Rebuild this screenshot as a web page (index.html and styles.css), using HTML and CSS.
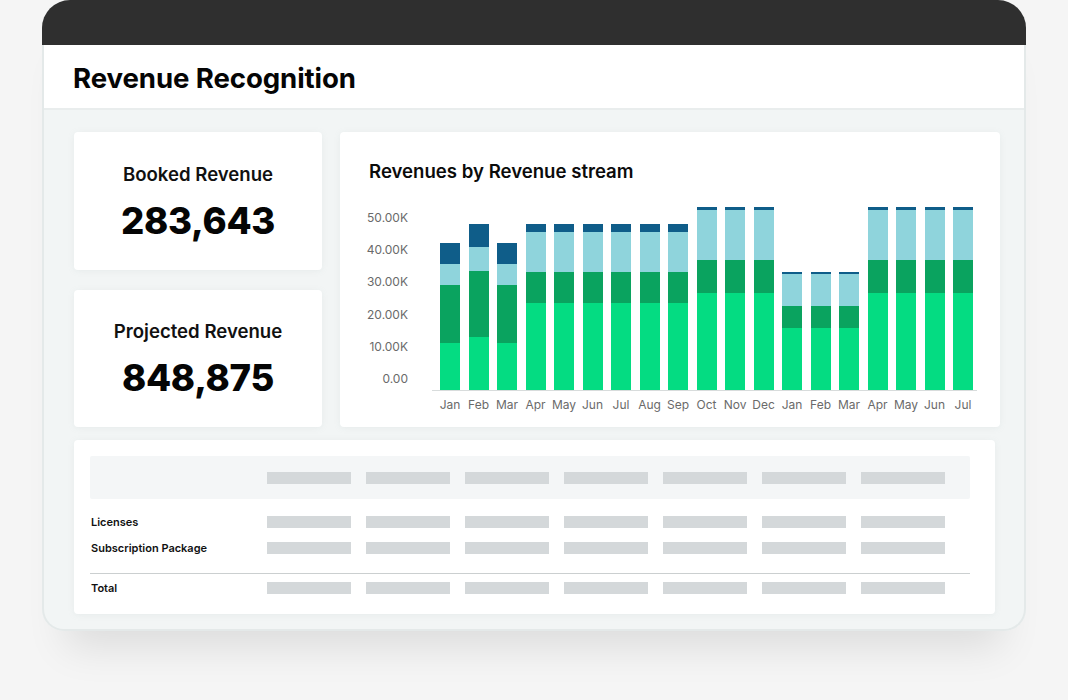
FILE: index.html
```html
<!DOCTYPE html>
<html lang="en">
<head>
<meta charset="utf-8">
<title>Revenue Recognition</title>
<link rel="stylesheet" href="styles.css">
</head>
<body>
<div class="frame">
  <div class="topbar"></div>
  <div class="main">
    <header class="header">
      <h1 class="title">Revenue Recognition</h1>
    </header>
    <div class="content">
      <div class="top-row">
        <div class="kpis">
          <section class="card kpi">
            <div class="kpi-label">Booked Revenue</div>
            <div class="kpi-value">283,643</div>
          </section>
          <section class="card kpi">
            <div class="kpi-label">Projected Revenue</div>
            <div class="kpi-value">848,875</div>
          </section>
        </div>
        <section class="card chart">
          <h2 class="chart-title">Revenues by Revenue stream</h2>
          <div class="chart-body">
            <div class="y-axis">
              <span>50.00K</span><span>40.00K</span><span>30.00K</span><span>20.00K</span><span>10.00K</span><span>0.00</span>
            </div>
            <div class="plot-wrap">
              <div class="plot">
                <div class="bar"><i class="s4" style="height:21px"></i><i class="s3" style="height:21px"></i><i class="s2" style="height:58px"></i><i class="s1" style="height:47px"></i></div>
                <div class="bar"><i class="s4" style="height:23px"></i><i class="s3" style="height:24px"></i><i class="s2" style="height:66px"></i><i class="s1" style="height:53px"></i></div>
                <div class="bar"><i class="s4" style="height:21px"></i><i class="s3" style="height:21px"></i><i class="s2" style="height:58px"></i><i class="s1" style="height:47px"></i></div>
                <div class="bar"><i class="s4" style="height:8px"></i><i class="s3" style="height:40px"></i><i class="s2" style="height:31px"></i><i class="s1" style="height:87px"></i></div>
                <div class="bar"><i class="s4" style="height:8px"></i><i class="s3" style="height:40px"></i><i class="s2" style="height:31px"></i><i class="s1" style="height:87px"></i></div>
                <div class="bar"><i class="s4" style="height:8px"></i><i class="s3" style="height:40px"></i><i class="s2" style="height:31px"></i><i class="s1" style="height:87px"></i></div>
                <div class="bar"><i class="s4" style="height:8px"></i><i class="s3" style="height:40px"></i><i class="s2" style="height:31px"></i><i class="s1" style="height:87px"></i></div>
                <div class="bar"><i class="s4" style="height:8px"></i><i class="s3" style="height:40px"></i><i class="s2" style="height:31px"></i><i class="s1" style="height:87px"></i></div>
                <div class="bar"><i class="s4" style="height:8px"></i><i class="s3" style="height:40px"></i><i class="s2" style="height:31px"></i><i class="s1" style="height:87px"></i></div>
                <div class="bar"><i class="s4" style="height:3px"></i><i class="s3" style="height:50px"></i><i class="s2" style="height:33px"></i><i class="s1" style="height:97px"></i></div>
                <div class="bar"><i class="s4" style="height:3px"></i><i class="s3" style="height:50px"></i><i class="s2" style="height:33px"></i><i class="s1" style="height:97px"></i></div>
                <div class="bar"><i class="s4" style="height:3px"></i><i class="s3" style="height:50px"></i><i class="s2" style="height:33px"></i><i class="s1" style="height:97px"></i></div>
                <div class="bar"><i class="s4" style="height:2px"></i><i class="s3" style="height:32px"></i><i class="s2" style="height:22px"></i><i class="s1" style="height:62px"></i></div>
                <div class="bar"><i class="s4" style="height:2px"></i><i class="s3" style="height:32px"></i><i class="s2" style="height:22px"></i><i class="s1" style="height:62px"></i></div>
                <div class="bar"><i class="s4" style="height:2px"></i><i class="s3" style="height:32px"></i><i class="s2" style="height:22px"></i><i class="s1" style="height:62px"></i></div>
                <div class="bar"><i class="s4" style="height:3px"></i><i class="s3" style="height:50px"></i><i class="s2" style="height:33px"></i><i class="s1" style="height:97px"></i></div>
                <div class="bar"><i class="s4" style="height:3px"></i><i class="s3" style="height:50px"></i><i class="s2" style="height:33px"></i><i class="s1" style="height:97px"></i></div>
                <div class="bar"><i class="s4" style="height:3px"></i><i class="s3" style="height:50px"></i><i class="s2" style="height:33px"></i><i class="s1" style="height:97px"></i></div>
                <div class="bar"><i class="s4" style="height:3px"></i><i class="s3" style="height:50px"></i><i class="s2" style="height:33px"></i><i class="s1" style="height:97px"></i></div>
              </div>
              <div class="months">
                <span>Jan</span><span>Feb</span><span>Mar</span><span>Apr</span><span>May</span><span>Jun</span><span>Jul</span><span>Aug</span><span>Sep</span><span>Oct</span><span>Nov</span><span>Dec</span><span>Jan</span><span>Feb</span><span>Mar</span><span>Apr</span><span>May</span><span>Jun</span><span>Jul</span>
              </div>
            </div>
          </div>
        </section>
      </div>
      <section class="card table-card">
        <div class="trow thead">
          <span class="tlabel"></span>
          <i class="ph"></i><i class="ph"></i><i class="ph"></i><i class="ph"></i><i class="ph"></i><i class="ph"></i><i class="ph"></i>
        </div>
        <div class="tbody">
          <div class="trow">
            <span class="tlabel">Licenses</span>
            <i class="ph"></i><i class="ph"></i><i class="ph"></i><i class="ph"></i><i class="ph"></i><i class="ph"></i><i class="ph"></i>
          </div>
          <div class="trow">
            <span class="tlabel">Subscription Package</span>
            <i class="ph"></i><i class="ph"></i><i class="ph"></i><i class="ph"></i><i class="ph"></i><i class="ph"></i><i class="ph"></i>
          </div>
        </div>
        <div class="trow ttotal">
          <span class="tlabel">Total</span>
          <i class="ph"></i><i class="ph"></i><i class="ph"></i><i class="ph"></i><i class="ph"></i><i class="ph"></i><i class="ph"></i>
        </div>
      </section>
    </div>
  </div>
</div>
</body>
</html>
```

FILE: styles.css
```css
* { box-sizing: border-box; }

html, body {
  margin: 0;
  padding: 0;
}

body {
  background: #f5f5f5;
  font-family: "Inter", "Liberation Sans", sans-serif;
  color: #0b0b0b;
  width: 1068px;
  height: 700px;
  overflow: hidden;
}

.frame {
  margin-left: 42px;
  width: 984px;
  border-radius: 28px 28px 22px 22px;
  box-shadow: 0 40px 40px -24px rgba(0, 0, 0, 0.10);
  background: #f2f5f5;
}

.topbar {
  height: 45px;
  background: #2f2f2f;
  border-radius: 28px 28px 0 0;
}

.main {
  border: 2px solid #e4e9e9;
  border-top: none;
  border-radius: 0 0 22px 22px;
  background: #f2f5f5;
  overflow: hidden;
}

.header {
  height: 65px;
  background: #ffffff;
  border-bottom: 2px solid #e9eded;
  display: flex;
  align-items: center;
  padding-left: 29px;
}

.title {
  margin: 0;
  font-size: 27.6px;
  font-weight: 700;
  letter-spacing: -0.1px;
  color: #050505;
  padding-top: 2px;
}

.content {
  padding: 22px 24px 15px 30px;
  display: flex;
  flex-direction: column;
  gap: 13px;
}

.top-row {
  display: flex;
  gap: 18px;
  height: 295px;
}

.card {
  background: #ffffff;
  border-radius: 4px;
  box-shadow: 0 1px 6px rgba(160, 175, 175, 0.12);
}

.kpis {
  width: 248px;
  display: flex;
  flex-direction: column;
  gap: 20px;
}

.kpi {
  flex: 1;
  display: flex;
  flex-direction: column;
  align-items: center;
  justify-content: center;
  padding-top: 2px;
}

.kpi-label {
  font-size: 18.6px;
  font-weight: 600;
  line-height: 22px;
  color: #111;
}

.kpi-value {
  margin-top: 16px;
  font-size: 36.6px;
  font-weight: 800;
  line-height: 40px;
  letter-spacing: -0.3px;
  color: #050505;
}

.chart {
  flex: 1;
  padding: 28px 20px 0 29px;
}

.chart-title {
  margin: 0;
  font-size: 18.6px;
  font-weight: 600;
  line-height: 22px;
  color: #0b0b0b;
}

.chart-body {
  display: flex;
  margin-top: 18px;
}

.y-axis {
  width: 39px;
  height: 175px;
  margin-top: 11px;
  display: flex;
  flex-direction: column;
  justify-content: space-between;
  align-items: flex-end;
  font-size: 12px;
  line-height: 14px;
  color: #6a6a6a;
}

.plot-wrap {
  margin-left: 24px;
  width: 545px;
}

.plot {
  height: 191px;
  display: flex;
  align-items: flex-end;
  gap: 8.5px;
  padding-left: 8px;
  border-bottom: 1px solid #d8dcdc;
}

.bar {
  width: 20px;
  display: flex;
  flex-direction: column;
}

.bar i { display: block; }
.s4 { background: #0f5d89; }
.s3 { background: #8fd4dc; }
.s2 { background: #0aa35f; }
.s1 { background: #04dc82; }

.months {
  display: flex;
  gap: 8.5px;
  padding-left: 8px;
  margin-top: 7px;
  font-size: 12px;
  line-height: 14px;
  color: #6a6a6a;
}

.months span {
  width: 20px;
  display: flex;
  justify-content: center;
  white-space: nowrap;
}

.table-card {
  margin-right: 5px;
  padding: 16px 25px 13px 16px;
}

.trow {
  display: grid;
  grid-template-columns: 162px repeat(7, 84px);
  column-gap: 15px;
  align-items: center;
  height: 26px;
}

.thead {
  height: 43px;
  background: #f4f6f7;
  border-radius: 2px;
}

.tbody {
  margin-top: 10px;
  padding-bottom: 12px;
  border-bottom: 1px solid #cbcfd0;
}

.ttotal {
  margin-top: 1px;
}

.tlabel {
  padding-left: 1px;
  font-size: 11px;
  font-weight: 600;
  color: #111;
  white-space: nowrap;
}

.ph {
  display: block;
  height: 12px;
  background: #d4d8da;
}
```
